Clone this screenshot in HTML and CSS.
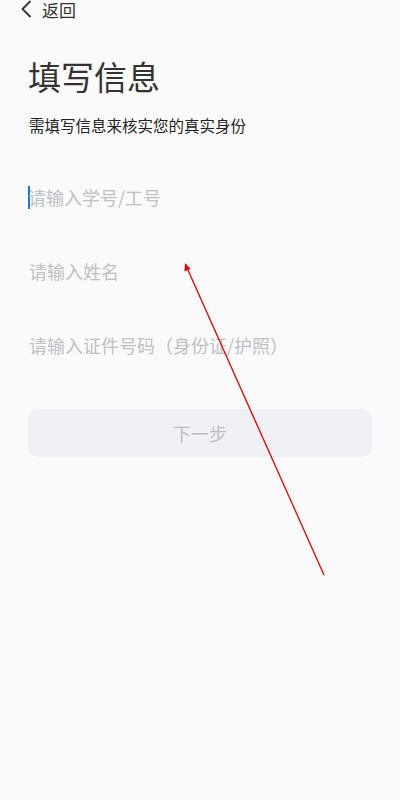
FILE: index.html
```html
<!DOCTYPE html>
<html lang="zh-CN">
<head>
<meta charset="utf-8">
<link rel="stylesheet" href="styles.css">
</head>
<body>
<div class="page">
  <div class="header">
    <svg class="back-icon" width="12" height="18" viewBox="0 0 12 18"><path d="M10 1.5 L2.5 9 L10 16.5" fill="none" stroke="#333" stroke-width="1.8" stroke-linecap="round" stroke-linejoin="round"/></svg>
    <span class="back-text">返回</span>
  </div>
  <div class="content">
    <h1 class="title">填写信息</h1>
    <p class="subtitle">需填写信息来核实您的真实身份</p>
    <div class="field"><span class="caret"></span><span class="placeholder">请输入学号/工号</span></div>
    <div class="field"><span class="placeholder">请输入姓名</span></div>
    <div class="field"><span class="placeholder">请输入证件号码（身份证/护照）</span></div>
    <div class="button">下一步</div>
  </div>
  <svg class="arrow" width="400" height="800" viewBox="0 0 400 800">
    <line x1="324" y1="575" x2="187.5" y2="269" stroke="#e00000" stroke-width="1.3"/>
    <polygon points="185,263 184.5,271.5 190.5,268.8" fill="#e00000"/>
  </svg>
</div>
</body>
</html>
```
FILE: styles.css
```css
html, body {
  margin: 0;
  padding: 0;
  background: #fafafa;
}
body {
  font-family: "Noto Sans CJK SC", "Noto Sans", sans-serif;
}
.page {
  position: relative;
  width: 400px;
  height: 800px;
  overflow: hidden;
}
.header {
  display: flex;
  align-items: center;
  height: 20px;
  padding-left: 20px;
  gap: 10px;
}
.back-icon {
  display: block;
  margin-top: -2px;
}
.back-text {
  font-size: 17px;
  line-height: 20px;
  color: #333;
}
.content {
  padding: 0 28px;
}
.title {
  margin: 35px 0 0 0;
  font-size: 33px;
  line-height: 42px;
  font-weight: 400;
  color: #333;
}
.subtitle {
  margin: 18px 0 0 1px;
  font-size: 15.5px;
  line-height: 20px;
  color: #222;
}
.field {
  display: flex;
  align-items: center;
  height: 74px;
  padding-left: 1px;
}
.field:first-of-type {
  margin-top: 25px;
}
.caret {
  display: inline-block;
  width: 2px;
  height: 23px;
  background: #1a73e8;
  margin-right: -2px;
  margin-left: -1px;
}
.placeholder {
  font-size: 18px;
  color: #c0c0c4;
  line-height: 24px;
}
.button {
  margin-top: 27px;
  height: 48px;
  border-radius: 10px;
  background: #f0f1f5;
  color: #bcbcc0;
  font-size: 18px;
  display: flex;
  align-items: center;
  justify-content: center;
}
.arrow {
  position: absolute;
  left: 0;
  top: 0;
  pointer-events: none;
}
```
